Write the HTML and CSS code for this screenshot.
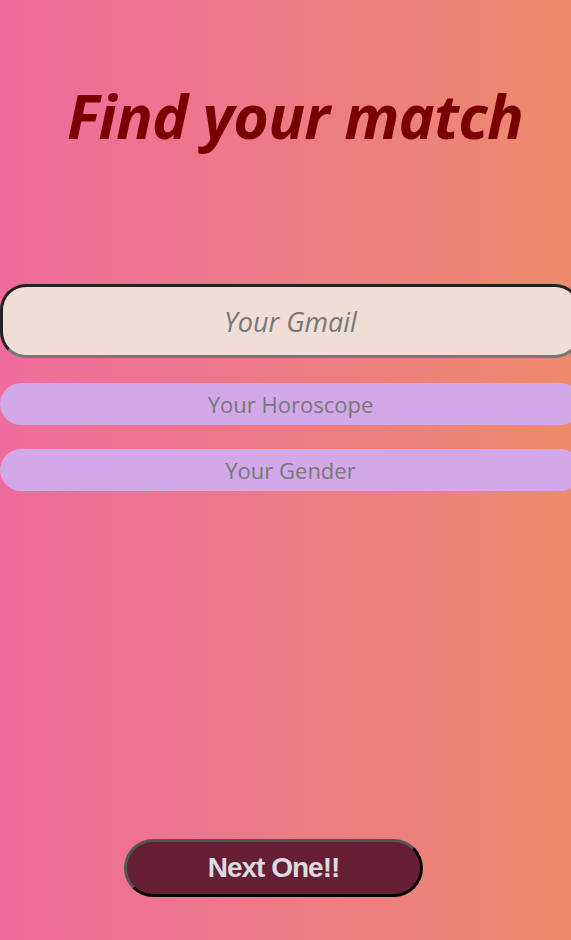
FILE: index.html
```html
<!DOCTYPE html>
<html lang="en">
<head>
<meta charset="utf-8">
<title>Find your match</title>
<link rel="stylesheet" href="styles.css">
</head>
<body>
<main class="page">
  <h1 class="title">Find your match</h1>
  <form class="form">
    <input class="field field-mail" type="text" placeholder="Your Gmail">
    <input class="field field-pill" type="text" placeholder="Your Horoscope">
    <input class="field field-pill" type="text" placeholder="Your Gender">
  </form>
  <button class="next" type="button">Next One!!</button>
</main>
</body>
</html>
```
FILE: styles.css
```css
html, body {
  margin: 0;
  padding: 0;
}
body {
  width: 571px;
  height: 940px;
  overflow: hidden;
  background: linear-gradient(to right, #ee6b9c 0%, #ed7b86 50%, #ed8a6b 100%);
  font-family: "Open Sans", "DejaVu Sans", sans-serif;
}
.page {
  display: flex;
  flex-direction: column;
  align-items: flex-start;
}
.title {
  margin: 80px 0 0 0;
  width: 590px;
  text-align: center;
  font-size: 61px;
  line-height: 72px;
  font-weight: 700;
  font-style: italic;
  color: #780000;
  letter-spacing: -0.8px;
}
.form {
  margin-top: 132px;
  display: flex;
  flex-direction: column;
  gap: 24px;
}
.field {
  box-sizing: border-box;
  width: 581px;
  margin: 0;
  text-align: center;
  font-family: "Open Sans", "DejaVu Sans", sans-serif;
  outline: none;
}
.field::placeholder {
  color: #777777;
  opacity: 1;
}
.field-mail {
  height: 74px;
  border-radius: 26px;
  border-style: solid;
  border-width: 3px;
  border-color: #222222 #777777 #777777 #222222;
  background: #f0ddd6;
  font-size: 27px;
  font-style: italic;
}
.field-pill {
  height: 42px;
  border: none;
  border-radius: 21px;
  background: #d3a8e8;
  font-size: 22px;
}
.field-mail + .field-pill {
  margin-top: 1px;
}
.next {
  margin: 348px 0 0 124px;
  box-sizing: border-box;
  width: 299px;
  height: 58px;
  border-radius: 29px;
  border-style: solid;
  border-width: 3px;
  border-color: #555555 #000000 #000000 #555555;
  background: #661f35;
  color: #dcdce0;
  font-family: "Liberation Sans", Arial, sans-serif;
  font-weight: 700;
  font-size: 28px;
  letter-spacing: -1px;
  cursor: pointer;
}
```
